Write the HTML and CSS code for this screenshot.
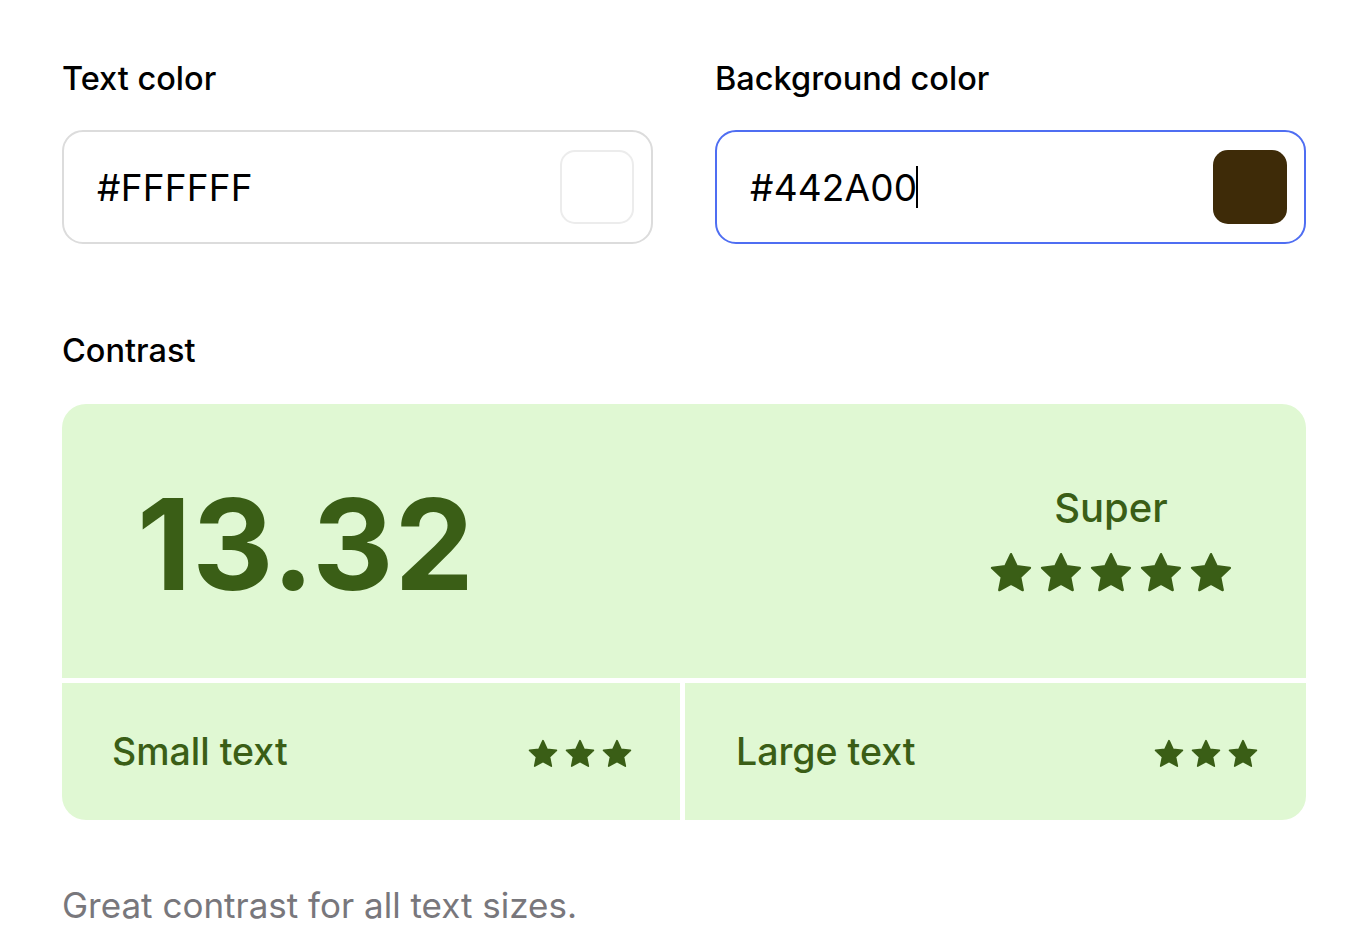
FILE: index.html
```html
<!DOCTYPE html>
<html lang="en">
<head>
<meta charset="utf-8">
<title>Contrast checker</title>
<link rel="stylesheet" href="styles.css">
</head>
<body>
<svg width="0" height="0" class="defs" aria-hidden="true">
  <symbol id="star" viewBox="0 0 24 24">
    <path d="M12 2.6l2.85 6.05 6.6.8-4.88 4.55 1.28 6.55L12 17.3l-5.85 3.25 1.28-6.55L2.55 9.45l6.6-.8z" fill="currentColor" stroke="currentColor" stroke-width="1.2" stroke-linejoin="round"/>
  </symbol>
</svg>
<main class="page">
  <section class="inputs">
    <div class="field">
      <div class="label">Text color</div>
      <div class="box">
        <span class="value">#FFFFFF</span>
        <span class="swatch swatch-white"></span>
      </div>
    </div>
    <div class="field">
      <div class="label">Background color</div>
      <div class="box box-focus">
        <span class="value">#442A00<span class="caret"></span></span>
        <span class="swatch swatch-brown"></span>
      </div>
    </div>
  </section>

  <div class="label contrast-label">Contrast</div>
  <section class="card">
    <div class="card-top">
      <div class="ratio">13.32</div>
      <div class="rating">
        <div class="rating-word">Super</div>
        <div class="stars stars-big">
          <svg><use href="#star"/></svg><svg><use href="#star"/></svg><svg><use href="#star"/></svg><svg><use href="#star"/></svg><svg><use href="#star"/></svg>
        </div>
      </div>
    </div>
    <div class="card-cell">
      <span class="cell-title">Small text</span>
      <div class="stars stars-small"><svg><use href="#star"/></svg><svg><use href="#star"/></svg><svg><use href="#star"/></svg></div>
    </div>
    <div class="card-cell">
      <span class="cell-title">Large text</span>
      <div class="stars stars-small"><svg><use href="#star"/></svg><svg><use href="#star"/></svg><svg><use href="#star"/></svg></div>
    </div>
  </section>
  <p class="note">Great contrast for all text sizes.</p>
</main>
</body>
</html>
```

FILE: styles.css
```css
* { box-sizing: border-box; }
html, body { margin: 0; background: #fff; }
body {
  font-family: Inter, "Noto Sans", "Liberation Sans", sans-serif;
  color: #000;
}
.defs { position: absolute; width: 0; height: 0; }
.page {
  width: 1244px;
  margin-left: 62px;
  padding-top: 60px;
}
.inputs {
  display: grid;
  grid-template-columns: 1fr 1fr;
  column-gap: 62px;
}
.label {
  font-size: 32.5px;
  font-weight: 500;
  line-height: 38px;
  letter-spacing: 0;
}
.box {
  margin-top: 32px;
  height: 114px;
  border: 2px solid #dcdcdc;
  border-radius: 21px;
  display: flex;
  align-items: center;
  justify-content: space-between;
  padding: 0 17px 0 33px;
}
.box-focus { border-color: #4f6ef2; }
.value {
  font-size: 37px;
  font-weight: 400;
  letter-spacing: 0.2px;
  display: inline-flex;
  align-items: center;
}
.caret {
  display: inline-block;
  width: 2px;
  height: 42px;
  background: #000;
  margin-left: -1px;
}
.swatch {
  width: 74px;
  height: 74px;
  border-radius: 15px;
}
.swatch-white { background: #fff; border: 2px solid #ececec; }
.swatch-brown { background: #3e2b08; }
.contrast-label { margin-top: 88px; }
.card {
  margin-top: 34px;
  display: grid;
  grid-template-columns: 618px 1fr;
  gap: 5px;
  border-radius: 24px;
  overflow: hidden;
  color: #3a5e16;
}
.card-top {
  grid-column: 1 / 3;
  background: #e0f8d3;
  height: 274px;
  display: flex;
  align-items: center;
  justify-content: space-between;
  padding: 0 71px 0 75px;
}
.ratio {
  font-size: 126px;
  font-weight: 700;
  letter-spacing: 1px;
  line-height: 1;
  margin-top: 5px;
}
.rating {
  display: flex;
  flex-direction: column;
  align-items: center;
}
.rating-word {
  font-size: 40px;
  font-weight: 500;
  line-height: 46px;
}
.stars { display: flex; }
.stars-big { gap: 2px; margin-top: 18px; }
.stars-big svg { width: 48px; height: 48px; }
.stars-small { gap: 3px; margin-top: 4px; }
.stars-small svg { width: 34px; height: 34px; }
.card-cell {
  background: #e0f8d3;
  height: 137px;
  display: flex;
  align-items: center;
  justify-content: space-between;
  padding: 0 46px 0 50px;
}
.card-cell + .card-cell { padding-left: 51px; }
.cell-title {
  font-size: 37.5px;
  font-weight: 500;
}
.note {
  margin: 64px 0 0;
  font-size: 35px;
  color: #78777c;
  font-weight: 400;
}
```
